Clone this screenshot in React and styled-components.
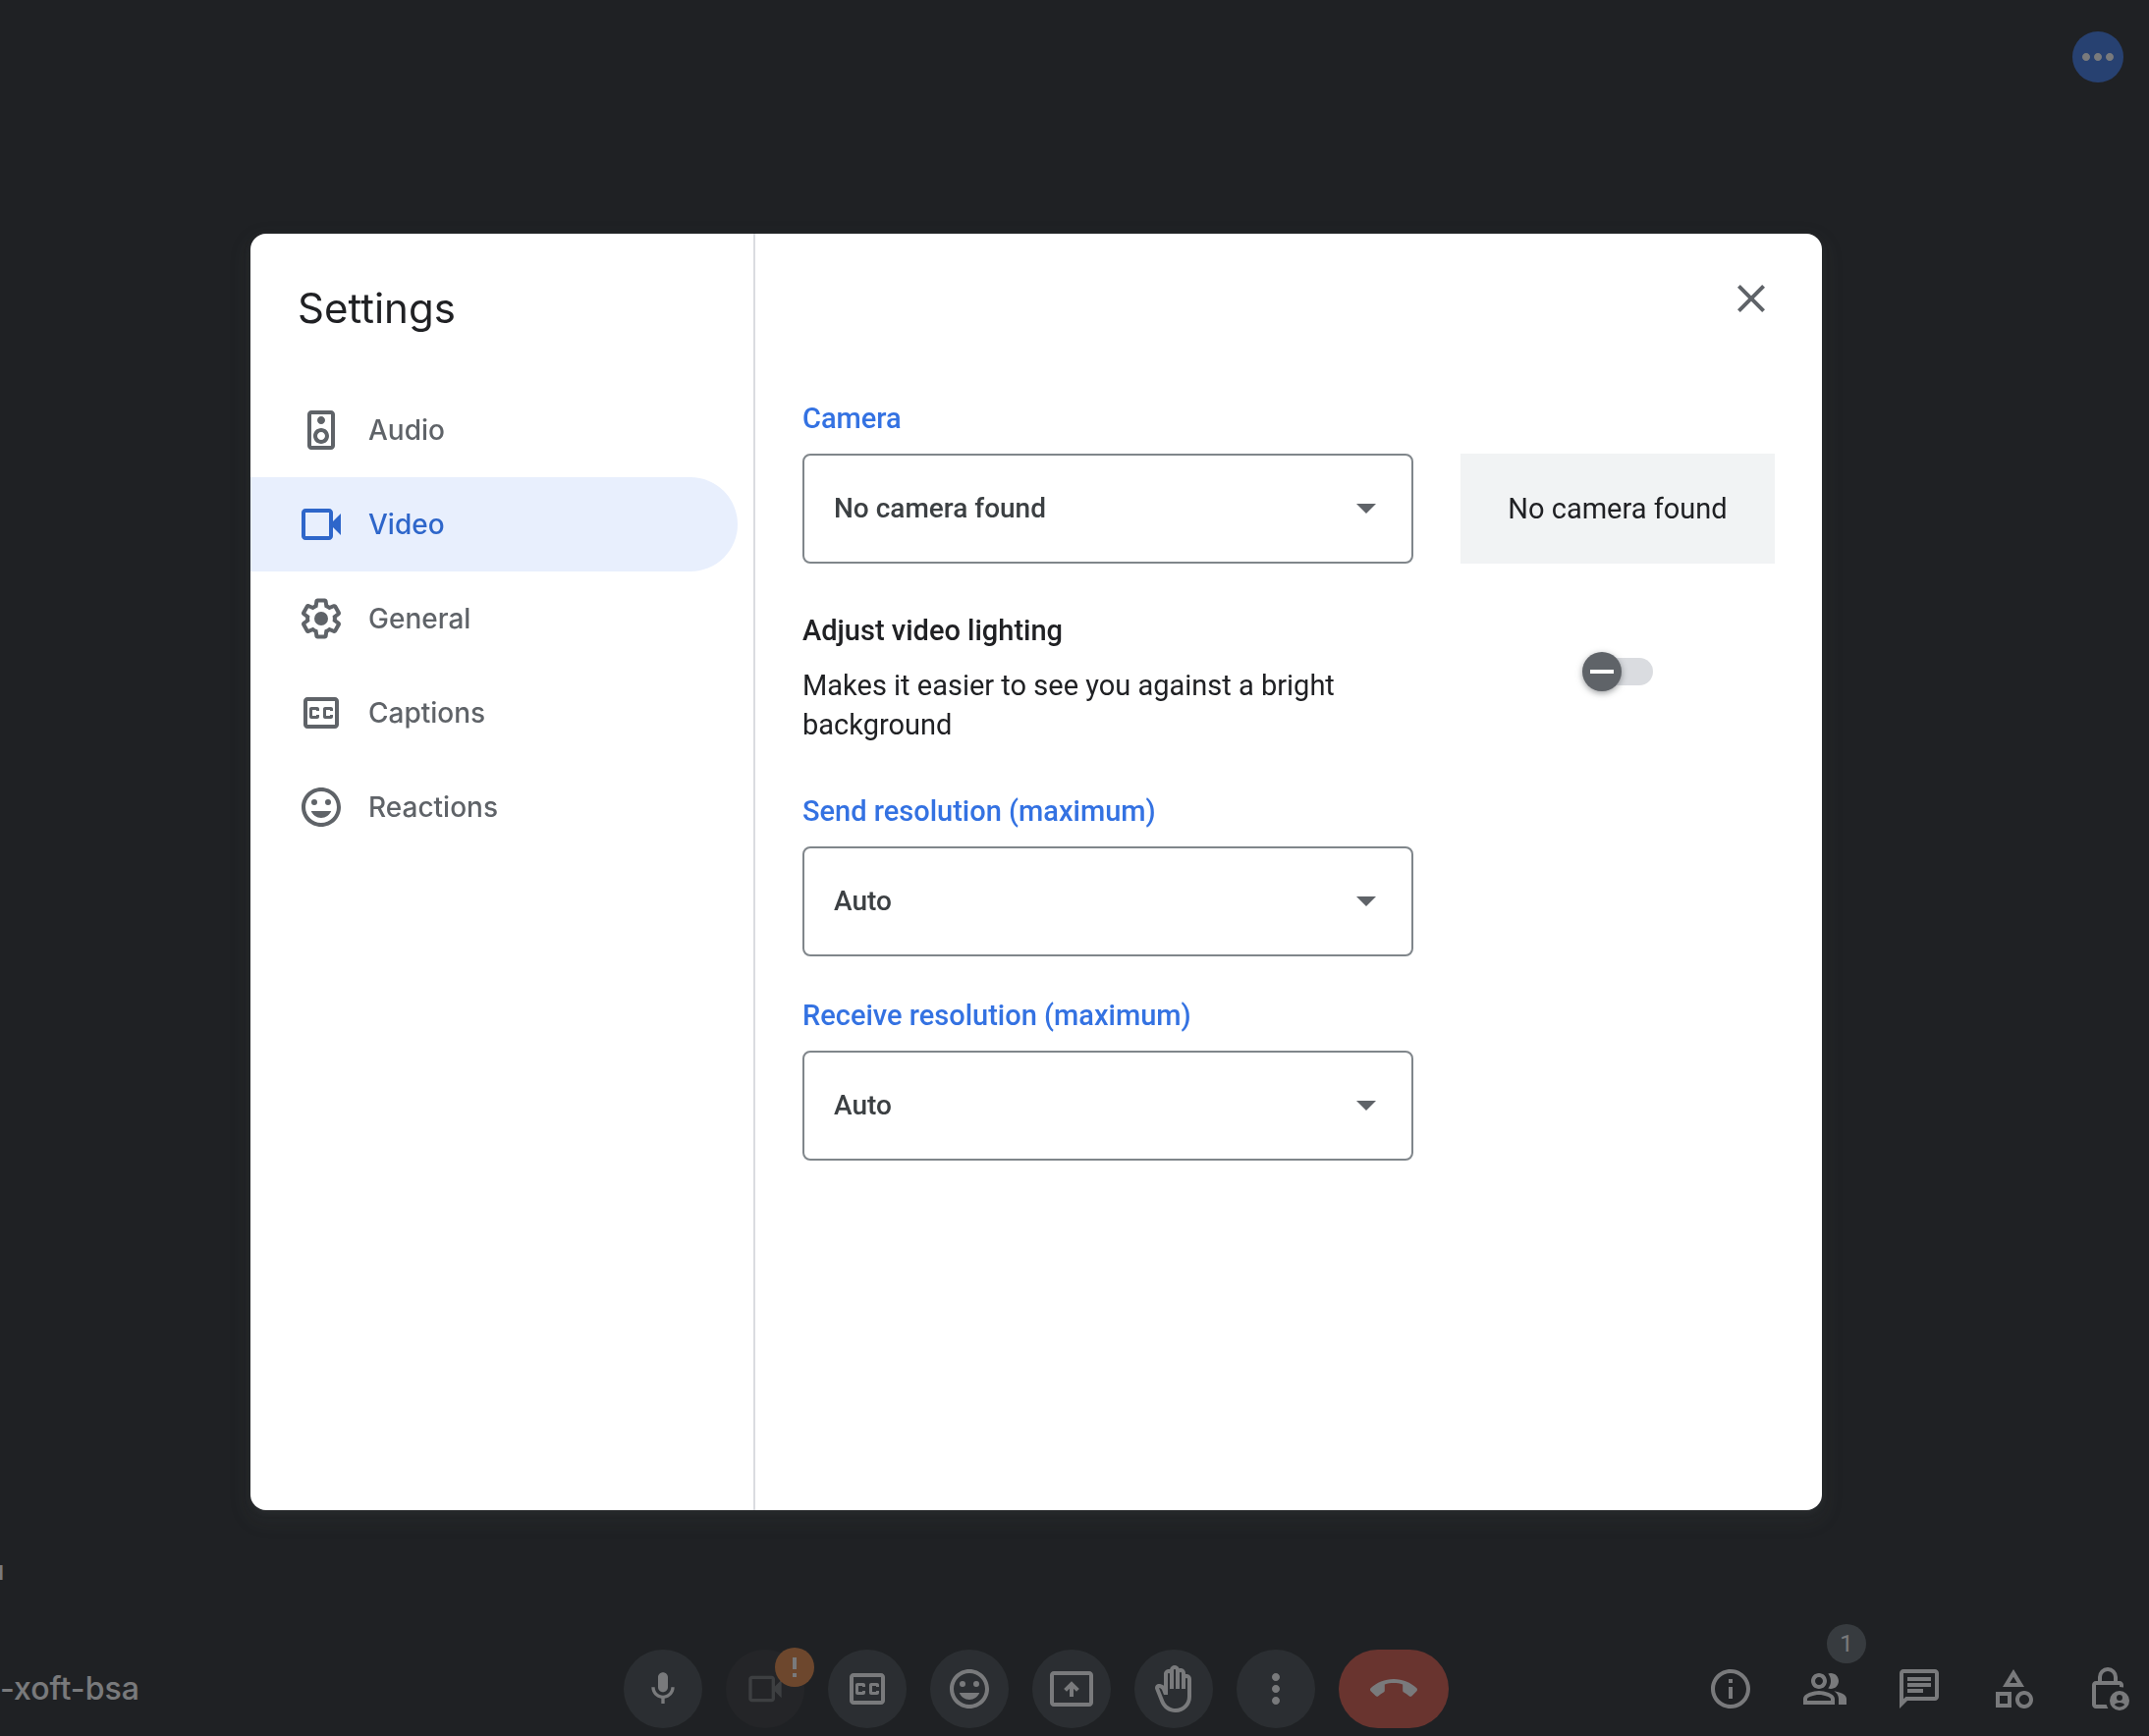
import React, { useState } from "react";
import styled, { createGlobalStyle, css } from "styled-components";

const GlobalStyle = createGlobalStyle`
  *, *::before, *::after { box-sizing: border-box; }
  html, body { margin: 0; height: 100%; }
  body {
    background: #202224;
    overflow: hidden;
    font-family: Roboto, "Liberation Sans", sans-serif;
    font-size: 29px;
    line-height: 40px;
    color: #202124;
  }
  button, select, input { font: inherit; }
`;

const BLEED = "78px";

/* ---------- call screen ---------- */

const Stage = styled.div`
  display: flex;
  flex-direction: column;
  min-height: 100vh;
  margin-left: -${BLEED};
  color: #fff;
`;

const TopBar = styled.header`
  display: flex;
  justify-content: flex-end;
  padding: 32px 26px;
`;

const MoreButton = styled.button`
  display: grid;
  place-items: center;
  width: 52px;
  height: 52px;
  padding: 0;
  border: 0;
  border-radius: 50%;
  background: #3471e3;
  color: #fff;
`;

const Tile = styled.main`
  flex: 1;
  display: flex;
  align-items: flex-end;
  padding: 0 0 56px ${BLEED};
`;

const ParticipantName = styled.div`
  display: flex;
  justify-content: flex-end;
  width: 4px;
  overflow: hidden;
  font-size: 28px;
  line-height: 32px;
  font-weight: 500;
`;

const BottomBar = styled.footer`
  display: grid;
  grid-template-columns: minmax(0, 1fr) auto minmax(0, 1fr);
  align-items: center;
  padding: 8px 0;
`;

const MeetingCode = styled.div`
  padding-left: ${BLEED};
  font-family: Inter, "Liberation Sans", sans-serif;
  font-size: 32px;
  font-weight: 500;
`;

const Controls = styled.div`
  display: flex;
  gap: 24px;
`;

const ControlButton = styled.button`
  position: relative;
  display: grid;
  place-items: center;
  width: ${(p) => (p.$wide ? "112px" : "80px")};
  height: 80px;
  padding: 0;
  border: 0;
  border-radius: 40px;
  background: ${(p) => (p.$wide ? "#d85140" : p.$off ? "#2b2c2e" : "#3c4346")};
  color: ${(p) => (p.$off ? "#6a6b6d" : "#fff")};
`;

const Panels = styled.div`
  display: flex;
  justify-content: flex-end;
  gap: 24px;
  padding-right: 6px;
`;

const PanelButton = styled.button`
  position: relative;
  display: grid;
  place-items: center;
  width: 72px;
  height: 80px;
  padding: 0;
  border: 0;
  background: none;
  color: #fff;
`;

const Badge = styled.span`
  position: absolute;
  display: grid;
  place-items: center;
  width: 40px;
  height: 40px;
  border-radius: 50%;
  color: #fff;
  font-size: 24px;
  ${(p) =>
    p.$warn
      ? css`top: -2px; right: -10px; background: #e0803a;`
      : css`top: -26px; right: -6px; background: #5b6367;`}
`;

/* ---------- settings dialog ---------- */

const Scrim = styled.div`
  position: fixed;
  inset: 0 0 0 -${BLEED};
  display: grid;
  place-items: center;
  padding-top: 8px;
  background: rgba(32, 34, 36, 0.6);
`;

const Dialog = styled.section`
  display: flex;
  width: min(1600px, 100% - 96px);
  min-height: 1300px;
  border-radius: 16px;
  overflow: hidden;
  background: #fff;
  box-shadow: 0 2px 6px rgba(60, 64, 67, 0.3), 0 8px 16px 6px rgba(60, 64, 67, 0.15);
`;

const Sidebar = styled.div`
  flex: 0 0 514px;
  border-right: 2px solid #dadce0;
`;

const Title = styled.h1`
  margin: 0;
  padding: 48px;
  font-family: Inter, "Liberation Sans", sans-serif;
  font-size: 42px;
  line-height: 56px;
  font-weight: 400;
`;

const Nav = styled.nav`
  display: flex;
  flex-direction: column;
  padding-right: 16px;
`;

const NavItem = styled.button`
  display: flex;
  align-items: center;
  gap: 24px;
  height: 96px;
  padding: 0 48px;
  border: 0;
  border-radius: 0 48px 48px 0;
  background: ${(p) => (p.$active ? "#e8effd" : "transparent")};
  color: ${(p) => (p.$active ? "#2e66ca" : "#5f6368")};
  font-family: Inter, "Liberation Sans", sans-serif;
  font-size: 28px;
  font-weight: 500;
  text-align: left;
`;

const Content = styled.div`
  flex: 1;
  min-width: 0;
  padding: 42px 48px 48px;
`;

const DialogHeader = styled.div`
  display: flex;
  justify-content: flex-end;
  padding-bottom: 78px;
`;

const CloseButton = styled.button`
  display: grid;
  width: 48px;
  height: 48px;
  padding: 0;
  border: 0;
  background: none;
  color: #5f6368;
`;

const Grid = styled.div`
  display: grid;
  grid-template-columns: minmax(0, 1fr) 320px;
  column-gap: 48px;
  margin-bottom: ${(p) => (p.$tight ? "40px" : "48px")};
`;

const Field = styled.div`
  display: flex;
  flex-direction: column;
  gap: 16px;
`;

const FieldLabel = styled.label`
  font-weight: 500;
  color: #3472e2;
`;

const SelectBox = styled.div`
  position: relative;
  display: flex;
  color: #5f6368;

  svg {
    position: absolute;
    top: 32px;
    right: 24px;
    pointer-events: none;
  }
`;

const Select = styled.select`
  appearance: none;
  flex: 1;
  min-width: 0;
  height: 112px;
  padding: 0 80px 0 30px;
  border: 2px solid #80868b;
  border-radius: 8px;
  background: #fff;
  color: #3c4043;
  font-size: 28px;
  font-weight: 500;
`;

const Preview = styled.div`
  align-self: end;
  display: grid;
  place-items: center;
  height: 112px;
  background: #f1f3f4;
`;

const OptionName = styled.label`
  display: block;
  margin-bottom: 16px;
  font-weight: 500;
`;

const OptionText = styled.p`
  margin: 0;
  max-width: 560px;
`;

const SwitchCell = styled.div`
  display: flex;
  justify-content: center;
  align-items: flex-start;
  padding-top: 42px;
`;

const Switch = styled.input`
  appearance: none;
  position: relative;
  width: 72px;
  height: 40px;
  margin: 0;

  &::before {
    content: "";
    position: absolute;
    inset: 6px 0 6px 4px;
    border-radius: 14px;
    background: #dadce0;
  }

  &::after {
    content: "";
    position: absolute;
    top: 0;
    left: ${(p) => (p.checked ? "32px" : "0")};
    width: 40px;
    height: 40px;
    border-radius: 50%;
    background: linear-gradient(#fff, #fff) center / 24px 4px no-repeat #5f6368;
    box-shadow: 0 2px 6px rgba(60, 64, 67, 0.5);
  }
`;

/* ---------- icons ---------- */

const Icon = ({ d, size = 48, children }) => (
  <svg width={size} height={size} viewBox="0 0 24 24" fill="currentColor" fillRule="evenodd" aria-hidden="true">
    {d && <path d={d} />}
    {children}
  </svg>
);

const paths = {
  speaker:
    "M17 2H7c-1.1 0-2 .9-2 2v16c0 1.1.9 2 2 2h10c1.1 0 2-.9 2-2V4c0-1.1-.9-2-2-2zm0 18H7V4h10v16zM12 9c1.1 0 2-.9 2-2s-.9-2-2-2-2 .9-2 2 .9 2 2 2zm0 10c2.21 0 4-1.79 4-4s-1.79-4-4-4-4 1.79-4 4 1.79 4 4 4zm0-6c1.1 0 2 .9 2 2s-.9 2-2 2-2-.9-2-2 .9-2 2-2z",
  video:
    "M18 10.48V6c0-1.1-.9-2-2-2H4c-1.1 0-2 .9-2 2v12c0 1.1.9 2 2 2h12c1.1 0 2-.9 2-2v-4.48l4 3.98v-11l-4 3.98zM16 18H4V6h12v12z",
  gear:
    "M13.85 22.25h-3.7c-.74 0-1.36-.54-1.45-1.27l-.27-1.89c-.27-.14-.53-.29-.79-.46l-1.8.72c-.7.26-1.47-.03-1.81-.65L2.2 15.53c-.35-.66-.2-1.44.36-1.88l1.53-1.19c-.01-.15-.02-.3-.02-.46 0-.15.01-.31.02-.46l-1.52-1.19c-.59-.45-.74-1.26-.37-1.88l1.85-3.19c.34-.62 1.11-.9 1.79-.63l1.81.73c.26-.17.52-.32.78-.46l.27-1.91c.09-.7.71-1.25 1.44-1.25h3.7c.74 0 1.36.54 1.45 1.27l.27 1.89c.27.14.53.29.79.46l1.8-.72c.71-.26 1.48.03 1.82.65l1.84 3.18c.36.66.2 1.44-.36 1.88l-1.52 1.19c.01.15.02.3.02.46s-.01.31-.02.46l1.52 1.19c.56.45.72 1.23.37 1.86l-1.86 3.22c-.34.62-1.11.9-1.8.63l-1.8-.72c-.26.17-.52.32-.78.46l-.27 1.91c-.1.68-.72 1.22-1.46 1.22zm-3.23-2h2.76l.37-2.55.53-.22c.44-.18.88-.44 1.34-.78l.45-.34 2.38.96 1.38-2.4-2.03-1.58.07-.56c.03-.26.06-.51.06-.78s-.03-.53-.06-.78l-.07-.56 2.03-1.58-1.39-2.4-2.39.96-.45-.35c-.42-.32-.87-.58-1.33-.77l-.52-.22-.37-2.55h-2.76l-.37 2.55-.53.21c-.44.19-.88.44-1.34.79l-.45.33-2.38-.95-1.39 2.39 2.03 1.58-.07.56a7 7 0 0 0-.06.79c0 .26.02.53.06.78l.07.56-2.03 1.58 1.38 2.4 2.39-.96.45.35c.43.33.86.58 1.33.77l.53.22.38 2.55z",
  captions:
    "M19 4H5c-1.11 0-2 .9-2 2v12c0 1.1.89 2 2 2h14c1.1 0 2-.9 2-2V6c0-1.1-.9-2-2-2zm0 14H5V6h14v12zM7 15h3c.55 0 1-.45 1-1v-1H9.5v.5h-2v-3h2v.5H11v-1c0-.55-.45-1-1-1H7c-.55 0-1 .45-1 1v4c0 .55.45 1 1 1zm7 0h3c.55 0 1-.45 1-1v-1h-1.5v.5h-2v-3h2v.5H18v-1c0-.55-.45-1-1-1h-3c-.55 0-1 .45-1 1v4c0 .55.45 1 1 1z",
  smile:
    "M12 2C6.48 2 2 6.48 2 12s4.48 10 10 10 10-4.48 10-10S17.52 2 12 2zm0 18c-4.42 0-8-3.58-8-8s3.58-8 8-8 8 3.58 8 8-3.58 8-8 8zM8.5 11a1.5 1.5 0 1 0 0-3 1.5 1.5 0 0 0 0 3zm7 0a1.5 1.5 0 1 0 0-3 1.5 1.5 0 0 0 0 3zM12 17.5c2.33 0 4.32-1.45 5.12-3.5H6.88c.8 2.05 2.79 3.5 5.12 3.5z",
  close:
    "M19 6.41L17.59 5 12 10.59 6.41 5 5 6.41 10.59 12 5 17.59 6.41 19 12 13.41 17.59 19 19 17.59 13.41 12 19 6.41z",
  caret: "M7 9.5l5 5 5-5z",
  mic:
    "M12 14c1.66 0 3-1.34 3-3V5c0-1.66-1.34-3-3-3S9 3.34 9 5v6c0 1.66 1.34 3 3 3zM17 11c0 2.76-2.24 5-5 5s-5-2.24-5-5H5c0 3.53 2.61 6.43 6 6.92V21h2v-3.08c3.39-.49 6-3.39 6-6.92h-2z",
  present:
    "M21 3H3c-1.11 0-2 .89-2 2v14c0 1.11.89 2 2 2h18c1.11 0 2-.89 2-2V5c0-1.11-.89-2-2-2zm0 16H3V5h18v14zM12 8.1L8.1 12l1.4 1.4 1.5-1.5V16h2v-4.1l1.5 1.5 1.4-1.4z",
  hand:
    "M21 7c0-1.38-1.12-2.5-2.5-2.5-.17 0-.34.02-.5.05V4c0-1.38-1.12-2.5-2.5-2.5-.23 0-.46.03-.67.09C14.46.66 13.56 0 12.5 0c-1.23 0-2.25.89-2.46 2.06C9.87 2.02 9.69 2 9.5 2 8.12 2 7 3.12 7 4.5v5.89c-.34-.31-.76-.54-1.22-.66L5.01 9.52c-.83-.23-1.7.09-2.19.83-.38.57-.4 1.31-.15 1.95l2.56 6.43C6.49 21.91 9.57 24 13 24c4.42 0 8-3.58 8-8V7zm-2 9c0 3.31-2.69 6-6 6-2.61 0-4.95-1.59-5.91-4.01l-2.6-6.54.53.14c.46.12.83.46 1 .9L7 15h2V4.5c0-.28.22-.5.5-.5s.5.22.5.5V12h2V2.5c0-.28.22-.5.5-.5s.5.22.5.5V12h2V4c0-.28.22-.5.5-.5s.5.22.5.5v8h2V7c0-.28.22-.5.5-.5s.5.22.5.5v9z",
  more:
    "M12 8c1.1 0 2-.9 2-2s-.9-2-2-2-2 .9-2 2 .9 2 2 2zm0 2c-1.1 0-2 .9-2 2s.9 2 2 2 2-.9 2-2-.9-2-2-2zm0 6c-1.1 0-2 .9-2 2s.9 2 2 2 2-.9 2-2-.9-2-2-2z",
  moreHoriz:
    "M6 10c-1.1 0-2 .9-2 2s.9 2 2 2 2-.9 2-2-.9-2-2-2zm12 0c-1.1 0-2 .9-2 2s.9 2 2 2 2-.9 2-2-.9-2-2-2zm-6 0c-1.1 0-2 .9-2 2s.9 2 2 2 2-.9 2-2-.9-2-2-2z",
  hangup:
    "M12 9c-1.6 0-3.15.25-4.6.72v3.1c0 .39-.23.74-.56.9-.98.49-1.87 1.12-2.66 1.85-.18.18-.43.28-.7.28-.28 0-.53-.11-.71-.29L.29 13.08c-.18-.17-.29-.42-.29-.7 0-.28.11-.53.29-.71C3.34 8.78 7.46 7 12 7s8.66 1.78 11.71 4.67c.18.18.29.43.29.71 0 .28-.11.53-.29.71l-2.48 2.48c-.18.18-.43.29-.71.29-.27 0-.52-.11-.7-.28-.79-.74-1.69-1.36-2.67-1.85-.33-.16-.56-.5-.56-.9v-3.1C15.15 9.25 13.6 9 12 9z",
  alert: "M10 2h4v12h-4zM10 18h4v4h-4z",
  info:
    "M11 7h2v2h-2zm0 4h2v6h-2zm1-9C6.48 2 2 6.48 2 12s4.48 10 10 10 10-4.48 10-10S17.52 2 12 2zm0 18c-4.41 0-8-3.59-8-8s3.59-8 8-8 8 3.59 8 8-3.59 8-8 8z",
  people:
    "M16.67 13.13C18.04 14.06 19 15.32 19 17v3h4v-3c0-2.18-3.57-3.47-6.33-3.87zM15 12c2.21 0 4-1.79 4-4s-1.79-4-4-4c-.47 0-.91.1-1.33.24C14.5 5.27 15 6.58 15 8s-.5 2.73-1.33 3.76c.42.14.86.24 1.33.24zM9 12c2.21 0 4-1.79 4-4s-1.79-4-4-4-4 1.79-4 4 1.79 4 4 4zm0-6c1.1 0 2 .9 2 2s-.9 2-2 2-2-.9-2-2 .9-2 2-2zm0 7c-2.67 0-8 1.34-8 4v3h16v-3c0-2.66-5.33-4-8-4zm6 5H3v-.99C3.2 16.29 6.3 15 9 15s5.8 1.29 6 2v1z",
  chat:
    "M4 4h16v12H5.17L4 17.17V4m0-2c-1.1 0-1.99.9-1.99 2L2 22l4-4h14c1.1 0 2-.9 2-2V4c0-1.1-.9-2-2-2H4zm2 10h8v2H6v-2zm0-3h12v2H6V9zm0-3h12v2H6V6z",
  activities:
    "M12 2l-5.5 9h11L12 2zm0 3.84L13.93 9h-3.87L12 5.84zM17.5 13c-2.49 0-4.5 2.01-4.5 4.5s2.01 4.5 4.5 4.5 4.5-2.01 4.5-4.5-2.01-4.5-4.5-4.5zm0 7c-1.38 0-2.5-1.12-2.5-2.5s1.12-2.5 2.5-2.5 2.5 1.12 2.5 2.5-1.12 2.5-2.5 2.5zM3 21.5h8v-8H3v8zm2-6h4v4H5v-4z",
  host:
    "M4 10c0-1.1.9-2 2-2h1V6a5 5 0 0 1 10 0v2h1c1.1 0 2 .9 2 2v1.3c-.6-.2-1.3-.3-2-.3v-1H6v10h5.3c.2.7.5 1.4.9 2H6c-1.1 0-2-.9-2-2V10zM9 8h6V6a3 3 0 0 0-6 0v2zM18 23a5 5 0 1 0 0-10 5 5 0 0 0 0 10zM18 18a1.5 1.5 0 1 0 0-3 1.5 1.5 0 0 0 0 3zM18 19c-1.1 0-2.1.4-2.6 1 .6.7 1.6 1.2 2.6 1.2s2-.5 2.6-1.2c-.5-.6-1.5-1-2.6-1z",
};

const sections = [
  ["Audio", "speaker"],
  ["Video", "video"],
  ["General", "gear"],
  ["Captions", "captions"],
  ["Reactions", "smile"],
];

function SelectField({ id, label, value }) {
  return (
    <Field>
      <FieldLabel htmlFor={id}>{label}</FieldLabel>
      <SelectBox>
        <Select id={id}>
          <option>{value}</option>
        </Select>
        <Icon d={paths.caret} />
      </SelectBox>
    </Field>
  );
}

function Settings() {
  const [section, setSection] = useState("Video");
  const [lighting, setLighting] = useState(false);
  return (
    <Dialog role="dialog" aria-labelledby="settings-title">
      <Sidebar>
        <Title id="settings-title">Settings</Title>
        <Nav>
          {sections.map(([name, icon]) => (
            <NavItem key={name} $active={name === section} onClick={() => setSection(name)}>
              <Icon d={paths[icon]}>{icon === "gear" && <circle cx="12" cy="12" r="3.5" />}</Icon>
              {name}
            </NavItem>
          ))}
        </Nav>
      </Sidebar>
      <Content>
        <DialogHeader>
          <CloseButton aria-label="Close dialog">
            <Icon d={paths.close} />
          </CloseButton>
        </DialogHeader>
        <Grid>
          <SelectField id="camera" label="Camera" value="No camera found" />
          <Preview>No camera found</Preview>
        </Grid>
        <Grid>
          <div>
            <OptionName htmlFor="lighting">Adjust video lighting</OptionName>
            <OptionText>Makes it easier to see you against a bright background</OptionText>
          </div>
          <SwitchCell>
            <Switch
              id="lighting"
              type="checkbox"
              role="switch"
              checked={lighting}
              onChange={(e) => setLighting(e.target.checked)}
            />
          </SwitchCell>
        </Grid>
        <Grid $tight>
          <SelectField id="send" label="Send resolution (maximum)" value="Auto" />
        </Grid>
        <Grid>
          <SelectField id="receive" label="Receive resolution (maximum)" value="Auto" />
        </Grid>
      </Content>
    </Dialog>
  );
}

export default function App() {
  return (
    <>
      <GlobalStyle />
      <Stage>
        <TopBar>
          <MoreButton aria-label="More options">
            <Icon d={paths.moreHoriz} />
          </MoreButton>
        </TopBar>
        <Tile>
          <ParticipantName>u</ParticipantName>
        </Tile>
        <BottomBar>
          <MeetingCode>-xoft-bsa</MeetingCode>
          <Controls>
            <ControlButton aria-label="Microphone">
              <Icon d={paths.mic} size={40} />
            </ControlButton>
            <ControlButton $off aria-label="Camera">
              <Icon d={paths.video} size={40} />
              <Badge $warn>
                <Icon d={paths.alert} size={24} />
              </Badge>
            </ControlButton>
            <ControlButton aria-label="Captions">
              <Icon d={paths.captions} />
            </ControlButton>
            <ControlButton aria-label="Reactions">
              <Icon d={paths.smile} />
            </ControlButton>
            <ControlButton aria-label="Present now">
              <Icon d={paths.present} />
            </ControlButton>
            <ControlButton aria-label="Raise hand">
              <Icon d={paths.hand} />
            </ControlButton>
            <ControlButton aria-label="More options">
              <Icon d={paths.more} />
            </ControlButton>
            <ControlButton $wide aria-label="Leave call">
              <Icon d={paths.hangup} />
            </ControlButton>
          </Controls>
          <Panels>
            <PanelButton aria-label="Meeting details">
              <Icon d={paths.info} />
            </PanelButton>
            <PanelButton aria-label="People">
              <Icon d={paths.people} />
              <Badge>1</Badge>
            </PanelButton>
            <PanelButton aria-label="Chat">
              <Icon d={paths.chat} />
            </PanelButton>
            <PanelButton aria-label="Activities">
              <Icon d={paths.activities} />
            </PanelButton>
            <PanelButton aria-label="Host controls">
              <Icon d={paths.host} />
            </PanelButton>
          </Panels>
        </BottomBar>
      </Stage>
      <Scrim>
        <Settings />
      </Scrim>
    </>
  );
}
